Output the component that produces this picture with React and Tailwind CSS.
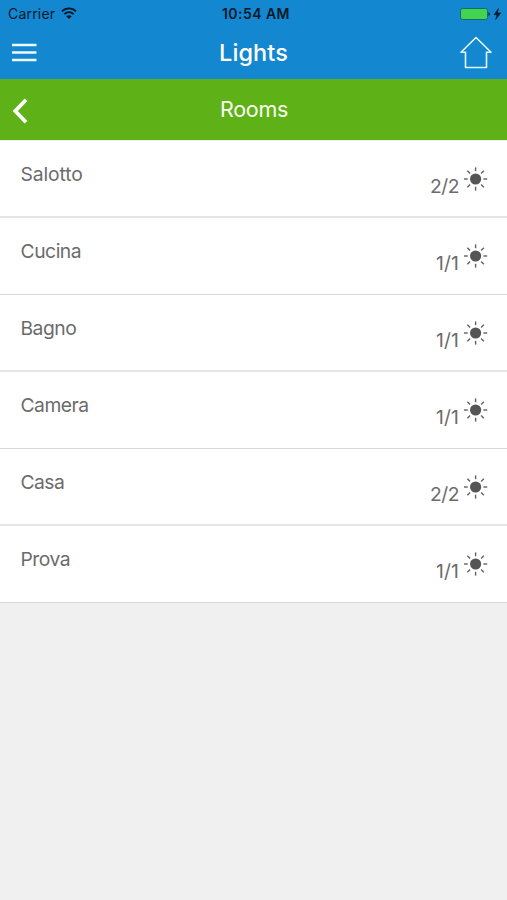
const rooms = [
  { name: "Salotto", on: "2/2", line: "border-b-2 border-[#e6e6e6]", track: "tracking-[-0.1px]", count: "tracking-[-0.5px]" },
  { name: "Cucina", on: "1/1", line: "border-b border-[#d9d9d9]", track: "tracking-[-0.45px]", count: "tracking-[0.1px]" },
  { name: "Bagno", on: "1/1", line: "border-b-2 border-[#e6e6e6]", track: "tracking-[-0.5px]", count: "tracking-[0.1px]" },
  { name: "Camera", on: "1/1", line: "border-b border-[#d9d9d9]", track: "tracking-[-0.5px]", count: "tracking-[0.1px]" },
  { name: "Casa", on: "2/2", line: "border-b-2 border-[#e6e6e6]", track: "tracking-[-0.55px]", count: "tracking-[-0.5px]" },
  { name: "Prova", on: "1/1", line: "border-b border-[#d9d9d9]", track: "tracking-[-0.5px]", count: "tracking-[0.1px]" },
];

const rays = [0, 45, 90, 135, 180, 225, 270, 315];

function Sun() {
  return (
    <svg className="h-6 w-6 shrink-0" viewBox="0 0 24 24" fill="none">
      <circle cx="11.6" cy="12" r="5.6" fill="#555" />
      {rays.map((a) => (
        <path key={a} d="M11.6 0.4V4.2" stroke="#606060" strokeWidth="1.4" transform={`rotate(${a} 11.6 12)`} />
      ))}
    </svg>
  );
}

function StatusBar() {
  return (
    <div className="grid h-[27px] grid-cols-3 items-center text-[#06192a]">
      <div className="flex items-center gap-[6px] pl-[8px]">
        <span className="text-[14px] leading-[27px] tracking-[0.2px]">Carrier</span>
        <svg className="-mt-[2px] h-[12px] w-[16px]" viewBox="0 0 16 12" fill="none" stroke="currentColor" strokeWidth="1.9">
          <path d="M1 4.4C5 .4 11 .4 15 4.4M3.4 7.1C6.1 4.5 9.9 4.5 12.6 7.1" />
          <path d="M8 12L5.2 9.2C6.8 7.8 9.2 7.8 10.8 9.2Z" fill="currentColor" stroke="none" />
        </svg>
      </div>
      <div className="pl-[5px] text-center text-[14px] font-semibold leading-[27px] tracking-[0.45px]">10:54 AM</div>
      <div className="flex justify-end pr-[5px]">
        <svg className="h-[14px] w-[43px]" viewBox="0 0 43 14">
          <rect x="1.5" y="1.5" width="27" height="11" rx="2" fill="#42d451" stroke="#136b70" />
          <path d="M29.5 5.2C31.2 5.5 31.2 8.5 29.5 8.8Z" fill="#06192a" />
          <path d="M39.5 1.5L35 7.7H38L36.7 12.5L41.7 5.9H38.5Z" fill="#06192a" stroke="#06192a" strokeWidth="0.6" />
        </svg>
      </div>
    </div>
  );
}

export default function App() {
  return (
    <div className="flex h-[900px] w-[507px] flex-col overflow-hidden bg-[#f0f0f0] font-[Inter,sans-serif]">
      <header className="h-[79px] bg-[#1387d0]">
        <StatusBar />
        <div className="grid h-[52px] grid-cols-3 items-center text-white">
          <svg className="ml-[11px] h-[20px] w-[26px]" viewBox="0 0 26 20">
            <path d="M1 2H25.5M1 9.5H25.5M1 17H25.5" stroke="#effaff" strokeWidth="2.3" />
          </svg>
          <h1 className="text-center text-[23.5px] font-medium leading-[50px] tracking-[0.1px]">Lights</h1>
          <svg className="ml-auto mr-[14px] h-[34px] w-[34px]" viewBox="0 0 34 34" fill="none">
            <path d="M17 1.5L2 16.2H6.5V31.5H27.5V16.2H32Z" stroke="#e4f7ff" strokeWidth="1.6" strokeLinejoin="round" />
          </svg>
        </div>
      </header>
      <div className="grid h-[61px] grid-cols-3 items-center bg-[#5eb117] text-[#fafff2]">
        <svg className="ml-[12px] mt-[2px] h-[28px] w-[18px]" viewBox="0 0 18 28" fill="none">
          <path d="M14 2.8L3.3 14L14 25.2" stroke="#fff" strokeWidth="3.8" />
        </svg>
        <h2 className="pl-px text-center text-[21.5px] leading-[61px] tracking-[-0.3px]">Rooms</h2>
      </div>
      <ul className="border-t border-[#eeeeee]">
        {rooms.map((r) => (
          <li key={r.name} className={`flex h-[77px] justify-between bg-white pl-[20.5px] pr-[19px] text-[#6b6b6b] ${r.line}`}>
            <span className={`pt-[19px] text-[19.3px] leading-[28px] ${r.track}`}>{r.name}</span>
            <span className="flex gap-[5px] pt-[26px]">
              <span className={`pt-[5px] text-[19.3px] leading-[28px] ${r.count}`}>{r.on}</span>
              <Sun />
            </span>
          </li>
        ))}
      </ul>
    </div>
  );
}
